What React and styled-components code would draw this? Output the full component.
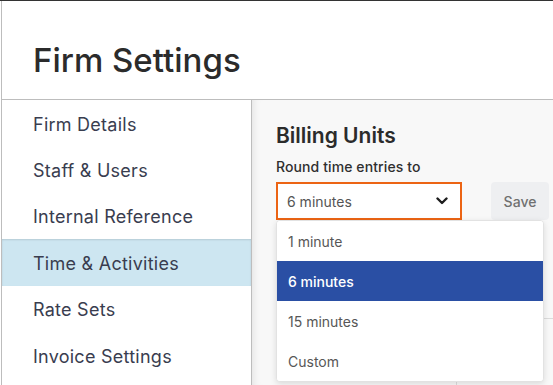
import React from "react";
import styled, { createGlobalStyle } from "styled-components";

const GlobalStyle = createGlobalStyle`
  html, body {
    margin: 0;
    padding: 0;
    background: #ffffff;
  }
  body {
    font-family: Inter, "Noto Sans", sans-serif;
    -webkit-font-smoothing: antialiased;
  }
`;

const menu = [
  "Firm Details",
  "Staff & Users",
  "Internal Reference",
  "Time & Activities",
  "Rate Sets",
  "Invoice Settings",
];

const options = ["1 minute", "6 minutes", "15 minutes", "Custom"];

const App = () => {
  return (
    <>
      <GlobalStyle />
      <Page>
        <Header>
          <Title>Firm Settings</Title>
        </Header>
        <Body>
          <Sidebar>
            {menu.map((item) => (
              <NavItem key={item} $active={item === "Time & Activities"}>
                {item}
              </NavItem>
            ))}
          </Sidebar>
          <Content>
            <SectionTitle>Billing Units</SectionTitle>
            <FieldLabel>Round time entries to</FieldLabel>
            <Controls>
              <SelectWrap>
                <SelectBox>
                  <span>6 minutes</span>
                  <Chevron viewBox="0 0 12 8">
                    <polyline points="1.5,1.5 6,6 10.5,1.5" />
                  </Chevron>
                </SelectBox>
                <Dropdown>
                  {options.map((opt) => (
                    <Option key={opt} $selected={opt === "6 minutes"}>
                      {opt}
                    </Option>
                  ))}
                </Dropdown>
              </SelectWrap>
              <SaveButton>Save</SaveButton>
            </Controls>
            <Table>
              <Cell />
              <Cell />
            </Table>
          </Content>
        </Body>
      </Page>
    </>
  );
};

export default App;

const Page = styled.div`
  width: 553px;
  height: 385px;
  box-sizing: border-box;
  border-top: 1px solid #333333;
  overflow: hidden;
  display: flex;
  flex-direction: column;
  padding-left: 1px;
`;

const Header = styled.header`
  height: 99px;
  box-sizing: border-box;
  padding: 39px 0 0 31px;
  border-left: 1px solid #bdbdbd;
  border-bottom: 1px solid #bdbdbd;
`;

const Title = styled.h1`
  margin: 0;
  font-size: 33px;
  line-height: 40px;
  font-weight: 500;
  color: #2b2b2b;
  letter-spacing: 0;
`;

const Body = styled.div`
  flex: 1;
  display: flex;
  min-height: 0;
`;

const Sidebar = styled.nav`
  width: 249px;
  flex-shrink: 0;
  border-left: 1px solid #bdbdbd;
  border-right: 1px solid #bdbdbd;
  background: #ffffff;
`;

const NavItem = styled.div`
  height: 46.4px;
  box-sizing: border-box;
  display: flex;
  align-items: center;
  padding: 2px 0 0 31px;
  font-size: 18px;
  letter-spacing: 0.25px;
  color: #393d4f;
  background: ${(p) => (p.$active ? "#cde6f1" : "transparent")};
  box-shadow: ${(p) =>
    p.$active ? "inset 0 1px 2px rgba(0, 0, 0, 0.12)" : "none"};
`;

const Content = styled.main`
  flex: 1;
  background: #f8f8f8;
  padding: 23px 0 0 24px;
  box-shadow: inset 8px 0 10px -8px rgba(0, 0, 0, 0.12);
`;

const SectionTitle = styled.h2`
  margin: 0;
  font-size: 21px;
  line-height: 26px;
  font-weight: 600;
  color: #2b2b2b;
`;

const FieldLabel = styled.div`
  margin-top: 9px;
  font-size: 14px;
  line-height: 18px;
  font-weight: 500;
  letter-spacing: 0.1px;
  color: #2f2f2f;
`;

const Controls = styled.div`
  margin-top: 6px;
  display: flex;
  align-items: center;
  gap: 29px;
`;

const SelectWrap = styled.div`
  position: relative;
`;

const SelectBox = styled.div`
  width: 186px;
  height: 38px;
  box-sizing: border-box;
  border: 2px solid #ec6414;
  background: #ffffff;
  display: flex;
  align-items: center;
  justify-content: space-between;
  padding: 0 12px 0 9px;
  font-size: 14px;
  color: #555555;
`;

const Chevron = styled.svg`
  width: 12px;
  height: 8px;
  fill: none;
  stroke: #1e1e1e;
  stroke-width: 2.4;
  stroke-linecap: round;
  stroke-linejoin: round;
`;

const Dropdown = styled.div`
  position: absolute;
  top: 38px;
  left: 0;
  width: 266px;
  background: #ffffff;
  border: 1px solid #e2e2e2;
  border-radius: 4px;
  box-shadow: 0 2px 6px rgba(0, 0, 0, 0.12);
  overflow: hidden;
  z-index: 5;
`;

const Option = styled.div`
  height: 40px;
  display: flex;
  align-items: center;
  padding-left: 11px;
  font-size: 14px;
  font-weight: ${(p) => (p.$selected ? 500 : 400)};
  color: ${(p) => (p.$selected ? "#ffffff" : "#575757")};
  background: ${(p) => (p.$selected ? "#2a4fa4" : "#ffffff")};
`;

const SaveButton = styled.button`
  width: 58px;
  height: 38px;
  border: none;
  border-radius: 4px;
  background: #eeeff1;
  font-family: inherit;
  font-size: 14px;
  font-weight: 500;
  color: #707070;
  padding: 0;
`;

const Table = styled.div`
  margin-top: 98px;
  display: grid;
  grid-template-columns: 181px 1fr;
  border-top: 1px solid #dcdcdc;
  height: 80px;
`;

const Cell = styled.div`
  &:first-child {
    border-right: 1px solid #dcdcdc;
  }
`;
